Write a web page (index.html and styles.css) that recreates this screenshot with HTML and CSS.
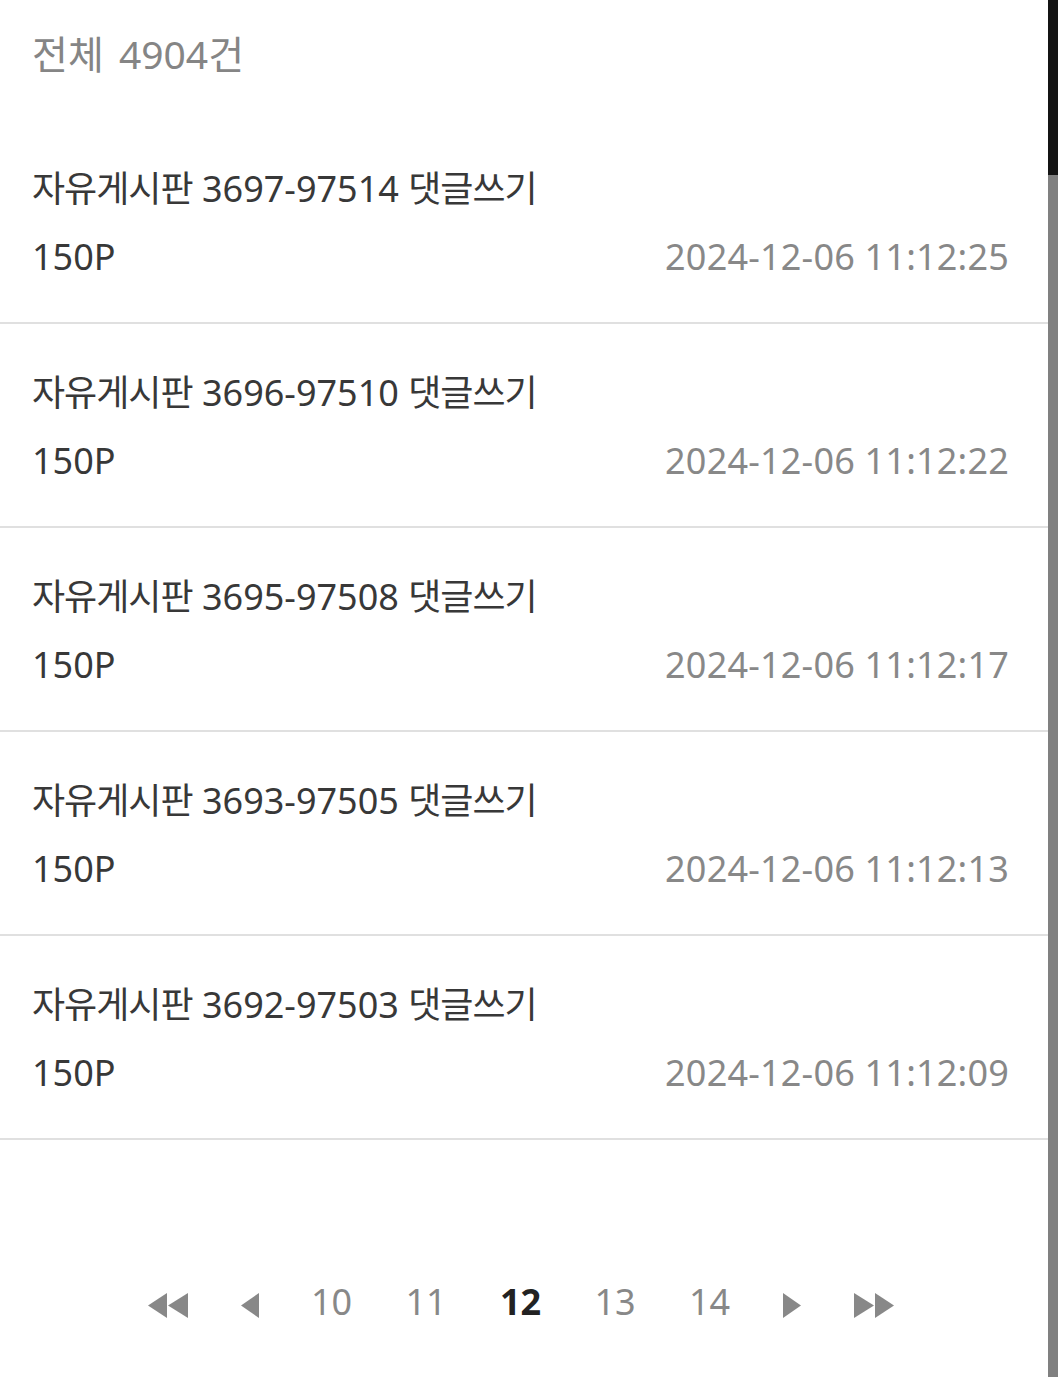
FILE: index.html
```html
<!DOCTYPE html>
<html lang="ko">
<head>
  <meta charset="UTF-8">
  <meta name="viewport" content="width=device-width, initial-scale=1.0">
  <title>포인트 내역</title>
  <link rel="stylesheet" href="styles.css">
</head>
<body>
  <div class="app">
    <main class="history">
      <div class="total">전체 4904건</div>

      <ul class="list">
        <li class="item">
          <p class="item-title"><span class="ko">자유게시판</span> 3697-97514 <span class="ko">댓글쓰기</span></p>
          <div class="item-meta"><span class="point">150P</span><span class="date">2024-12-06 11:12:25</span></div>
        </li>
        <li class="item">
          <p class="item-title"><span class="ko">자유게시판</span> 3696-97510 <span class="ko">댓글쓰기</span></p>
          <div class="item-meta"><span class="point">150P</span><span class="date">2024-12-06 11:12:22</span></div>
        </li>
        <li class="item">
          <p class="item-title"><span class="ko">자유게시판</span> 3695-97508 <span class="ko">댓글쓰기</span></p>
          <div class="item-meta"><span class="point">150P</span><span class="date">2024-12-06 11:12:17</span></div>
        </li>
        <li class="item">
          <p class="item-title"><span class="ko">자유게시판</span> 3693-97505 <span class="ko">댓글쓰기</span></p>
          <div class="item-meta"><span class="point">150P</span><span class="date">2024-12-06 11:12:13</span></div>
        </li>
        <li class="item">
          <p class="item-title"><span class="ko">자유게시판</span> 3692-97503 <span class="ko">댓글쓰기</span></p>
          <div class="item-meta"><span class="point">150P</span><span class="date">2024-12-06 11:12:09</span></div>
        </li>
      </ul>

      <!-- paging -->
      <nav class="pager">
        <a class="pager-arrow pager-wide" href="#" aria-label="처음">
          <svg width="40" height="60" viewBox="0 0 40 60"><polygon points="0,33.5 19,21 19,46"/><polygon points="20,33.5 40,21 40,46"/></svg>
        </a>
        <a class="pager-arrow pager-narrow" href="#" aria-label="이전">
          <svg width="18" height="60" viewBox="0 0 18 60"><polygon points="0,33.5 18,21 18,46"/></svg>
        </a>
        <a class="pager-num" href="#">10</a>
        <a class="pager-num" href="#">11</a>
        <strong class="pager-num current">12</strong>
        <a class="pager-num" href="#">13</a>
        <a class="pager-num" href="#">14</a>
        <a class="pager-arrow pager-narrow" href="#" aria-label="다음">
          <svg width="18" height="60" viewBox="0 0 18 60"><polygon points="18,33.5 0,21 0,46"/></svg>
        </a>
        <a class="pager-arrow pager-wide" href="#" aria-label="마지막">
          <svg width="40" height="60" viewBox="0 0 40 60"><polygon points="20,33.5 0,21 0,46"/><polygon points="40,33.5 21,21 21,46"/></svg>
        </a>
      </nav>
    </main>

    <div class="scrollbar"><div class="scrollbar-thumb"></div></div>
  </div>
</body>
</html>
```

FILE: styles.css
```css
  body {
    margin: 0;
    font-family: "Noto Sans", "Noto Sans CJK KR", sans-serif;
    background-color: #fff;
    color: #333;
  }

  .app {
    display: flex;
    min-height: 100vh;
  }

  .history {
    flex: 1;
  }

  /* korean glyphs are a little narrower in the original font */
  .ko {
    letter-spacing: -1px;
  }

  .total {
    padding: 26px 39px 38px 32px;
    font-size: 39px;
    line-height: 56px;
    color: #858585;
    word-spacing: 5px;
  }

  .list {
    list-style: none;
    margin: 0;
    padding: 0;
  }

  .item {
    padding: 35px 39px 31px 32px;
    border-bottom: 2px solid #e0e0e0;
  }

  .item-title {
    margin: 0;
    font-size: 36px;
    line-height: 68px;
    color: #383838;
  }

  .item-meta {
    display: flex;
    justify-content: space-between;
    font-size: 36px;
    line-height: 68px;
  }

  .point {
    color: #383838;
  }

  .date {
    color: #888;
    letter-spacing: 0.2px;
  }

  .pager {
    display: flex;
    justify-content: center;
    margin-top: 132px;
    padding: 0 39px 0 32px;
    height: 60px;
  }

  .pager a,
  .pager strong {
    display: flex;
    justify-content: center;
    align-items: flex-start;
    height: 60px;
    text-decoration: none;
  }

  .pager-num {
    width: 94.5px;
    font-size: 36px;
    line-height: 60px;
    color: #888;
  }

  .pager-num.current {
    font-weight: bold;
    color: #222;
  }

  .pager-wide {
    width: 94.5px;
  }

  .pager-narrow {
    width: 69.5px;
  }

  .pager-arrow svg {
    fill: #888;
    filter: blur(0.5px);
  }

  .scrollbar {
    width: 10px;
    background-color: #808080;
  }

  .scrollbar-thumb {
    height: 175px;
    background-color: #141414;
  }
```
